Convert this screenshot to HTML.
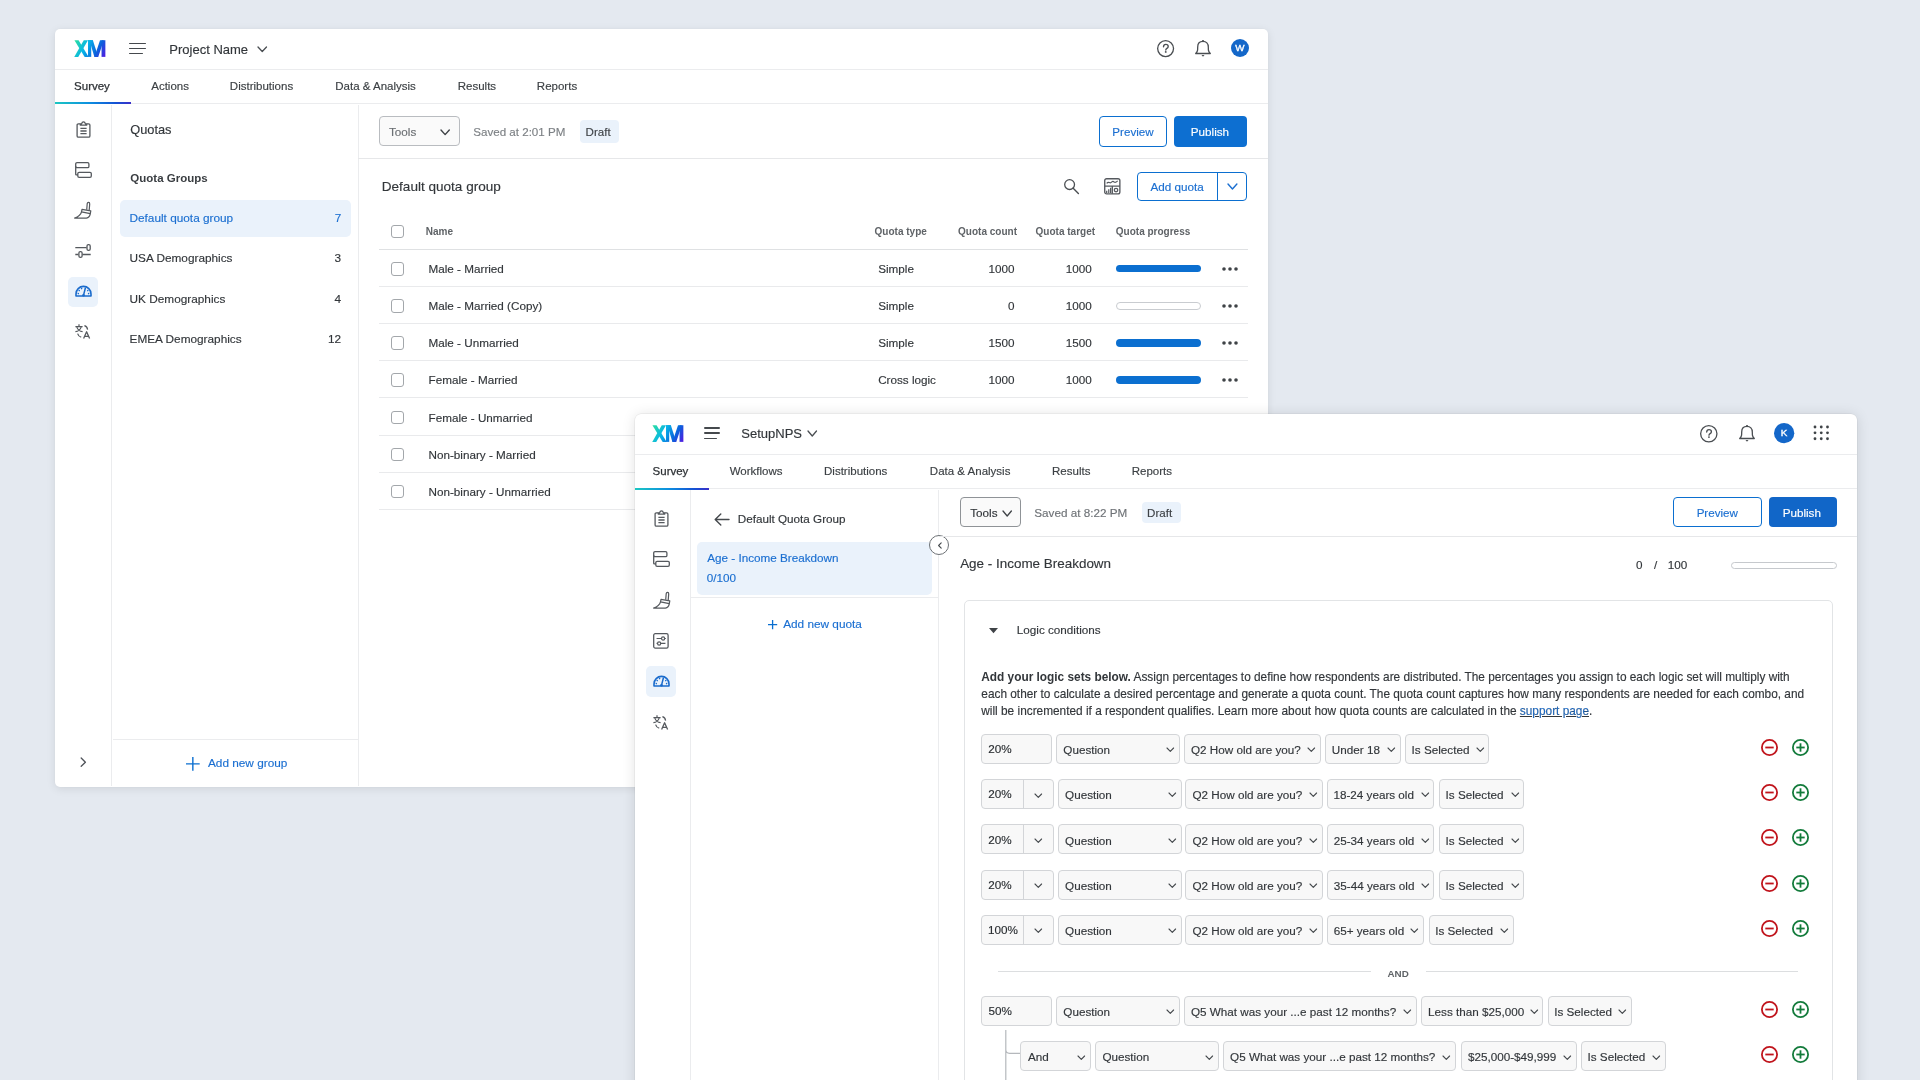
<!DOCTYPE html>
<html><head><meta charset="utf-8"><title>Quotas</title>
<style>
html,body{margin:0;padding:0}
body{width:1920px;height:1080px;overflow:hidden;position:relative;background:#e4e9f0;font-family:"Liberation Sans",sans-serif}
.t{position:absolute;white-space:nowrap}
svg{overflow:visible}
</style></head><body>
<div style="position:absolute;left:0;top:0;width:1920px;height:1080px;will-change:transform">
<div style="position:absolute;left:55.00px;top:29.00px;width:1213.00px;height:757.80px;background:#fff;border-radius:5px;box-shadow:0 2px 10px rgba(0,0,0,0.09),0 0 2px rgba(0,0,0,0.05)"></div>
<svg style="position:absolute;left:74.44px;top:39.78px;" width="31.56" height="17.11" viewBox="200 170 1420 770" fill="none"><defs><linearGradient id="lg1" x1="200" y1="150" x2="1640" y2="960" gradientUnits="userSpaceOnUse">
<stop offset="0" stop-color="#2fe39a"/><stop offset="0.38" stop-color="#07b4e8"/><stop offset="0.7" stop-color="#0a62dc"/><stop offset="1" stop-color="#5b10e2"/></linearGradient></defs>
<g fill="url(#lg1)">
<path d="M220 180 L405 180 L860 930 L680 930 Z"/>
<path d="M210 930 L390 930 L830 180 L640 180 Z"/>
<path d="M830 180 L975 180 L975 930 L830 930 Z"/>
<path d="M893 180 L1050 180 L1290 930 L1120 930 Z"/>
<path d="M1370 180 L1540 180 L1290 930 L1120 930 Z"/>
<path d="M1440 180 L1612 180 L1612 930 L1440 930 Z"/>
<path d="M830 180 L1050 180 L1050 240 L830 240 Z"/>
</g></svg>
<div style="position:absolute;left:129.00px;top:42.75px;width:17.00px;height:1.70px;background:#45494d;border-radius:1px"></div>
<div style="position:absolute;left:129.00px;top:47.75px;width:17.00px;height:1.70px;background:#45494d;border-radius:1px"></div>
<div style="position:absolute;left:129.00px;top:52.75px;width:13.50px;height:1.70px;background:#45494d;border-radius:1px"></div>
<div class="t" style="left:169.33px;top:42.75px;font-size:13px;line-height:13px;color:#32363a;-webkit-text-stroke:0.15px #32363a;">Project Name</div>
<svg style="position:absolute;left:257.30px;top:46.30px;" width="10.50" height="6.50" viewBox="-1 -1 10.5 6.5" fill="none"><path d="M0 0 L4.25 4.5 L8.5 0" stroke="#4a4e52" stroke-width="1.3" stroke-linecap="round" stroke-linejoin="round"/></svg>
<svg style="position:absolute;left:1156.20px;top:38.80px;" width="19.20" height="19.20" viewBox="-9.6 -9.6 19.2 19.2" fill="none"><circle cx="0" cy="0" r="7.949999999999999" stroke="#4a4e52" stroke-width="1.3"/><path d="M-2.1 -1.8 Q-2 -4.2 0.2 -4.2 Q2.6 -4.2 2.6 -2.1 Q2.6 -0.9 1.3 -0.2 Q0.2 0.4 0.2 1.4" stroke="#4a4e52" stroke-width="1.35" stroke-linecap="round" stroke-linejoin="round"/><circle cx="0.15" cy="3.3" r="0.95" fill="#4a4e52"/></svg>
<svg style="position:absolute;left:1195.00px;top:39.80px;" width="16.00" height="17.00" viewBox="0 0 16 17" fill="none"><path d="M8 1.3 C4.7 1.3 2.7 3.5 2.7 7 L2.6 10.2 Q2.3 12 0.7 13.5 L15.3 13.5 Q13.7 12 13.4 10.2 L13.3 7 C13.3 3.5 11.3 1.3 8 1.3 Z" stroke="#4a4e52" stroke-width="1.3" stroke-linejoin="round"/><circle cx="8" cy="1.1" r="1.05" fill="#4a4e52"/><path d="M6.5 15 L9.5 15 L8 16.7 Z" fill="#4a4e52"/></svg>
<svg style="position:absolute;left:1230.80px;top:39.00px;" width="18.00" height="18.00" viewBox="0 0 18 18" fill="none"><circle cx="9.0" cy="9.0" r="9.0" fill="#1467c9"/></svg>
<div class="t" style="left:1235.18px;top:43.10px;font-size:9.8px;line-height:9.8px;color:#ffffff;-webkit-text-stroke:0.35px #fff;">W</div>
<div style="position:absolute;left:55.00px;top:69.00px;width:1213.00px;height:1.00px;background:#ebecee"></div>
<div class="t" style="left:74.08px;top:81.07px;font-size:11.5px;line-height:11.5px;color:#2e3236;-webkit-text-stroke:0.25px #2e3236;">Survey</div>
<div class="t" style="left:151.23px;top:81.07px;font-size:11.5px;line-height:11.5px;color:#3c4044;-webkit-text-stroke:0.15px #3c4044;">Actions</div>
<div class="t" style="left:229.86px;top:81.07px;font-size:11.5px;line-height:11.5px;color:#3c4044;-webkit-text-stroke:0.15px #3c4044;">Distributions</div>
<div class="t" style="left:335.26px;top:81.07px;font-size:11.5px;line-height:11.5px;color:#3c4044;-webkit-text-stroke:0.15px #3c4044;">Data &amp; Analysis</div>
<div class="t" style="left:457.76px;top:81.07px;font-size:11.5px;line-height:11.5px;color:#3c4044;-webkit-text-stroke:0.15px #3c4044;">Results</div>
<div class="t" style="left:536.86px;top:81.07px;font-size:11.5px;line-height:11.5px;color:#3c4044;-webkit-text-stroke:0.15px #3c4044;">Reports</div>
<div style="position:absolute;left:55.00px;top:103.00px;width:1213.00px;height:1.00px;background:#ebecee"></div>
<div style="position:absolute;left:55.00px;top:102.30px;width:76.00px;height:2.00px;background:linear-gradient(90deg,#1cc7c2 0%,#0d8fe0 45%,#1552d4 80%,#3a2fc9 100%)"></div>
<div style="position:absolute;left:111.30px;top:104.60px;width:1.00px;height:681.40px;background:#ebecee"></div>
<div style="position:absolute;left:357.80px;top:104.60px;width:1.00px;height:681.40px;background:#ebecee"></div>
<svg style="position:absolute;left:75.50px;top:121.00px;" width="15.00" height="17.00" viewBox="0 0 15 17" fill="none"><path d="M4.3 2.8 L2.4 2.8 Q1.1 2.8 1.1 4.1 L1.1 14.9 Q1.1 16.2 2.4 16.2 L12.6 16.2 Q13.9 16.2 13.9 14.9 L13.9 4.1 Q13.9 2.8 12.6 2.8 L10.7 2.8" stroke="#55595e" stroke-width="1.3"/><path d="M4.3 2.8 L5.6 2.8 Q6 0.8 7.5 0.8 Q9 0.8 9.4 2.8 L10.7 2.8 L10.7 4.2 L4.3 4.2 Z" stroke="#55595e" stroke-width="1.2" stroke-linejoin="round"/><path d="M4.4 7.4 H10.6 M4.4 10 H10.6 M4.4 12.6 H10.6" stroke="#55595e" stroke-width="1.3"/></svg>
<svg style="position:absolute;left:74.50px;top:161.80px;" width="17.00" height="17.00" viewBox="0 0 17 17" fill="none"><rect x="0.7" y="0.7" width="13.2" height="5" rx="1.3" stroke="#55595e" stroke-width="1.3"/><rect x="2.8" y="10.3" width="13.5" height="5" rx="1.3" stroke="#55595e" stroke-width="1.3"/><path d="M0.7 4 L0.7 12.2 Q0.7 12.8 1.3 12.8 L2.8 12.8" stroke="#55595e" stroke-width="1.3"/></svg>
<svg style="position:absolute;left:74.00px;top:202.00px;" width="17.00" height="17.00" viewBox="0 0 17 17" fill="none"><path d="M12.7 7.7 L13.2 1.7 Q13.4 0.3 14.6 0.4 Q15.8 0.5 15.7 1.9 L15.2 8.2" stroke="#55595e" stroke-width="1.2"/><path d="M8 7.3 L16.8 8.9 L16.3 11.7 L7.5 9.9 Z" stroke="#55595e" stroke-width="1.2" stroke-linejoin="round"/><path d="M7.5 9.9 Q6.6 14 0.6 16.1 L12.4 16.1 Q15.6 15.9 16.3 11.7" stroke="#55595e" stroke-width="1.2" stroke-linejoin="round"/></svg>
<svg style="position:absolute;left:75.00px;top:244.00px;" width="16.00" height="14.00" viewBox="0 0 16 14" fill="none"><path d="M0.3 3.6 H11.6 M0.3 10.5 H3.4 M7.4 10.5 H15.7" stroke="#55595e" stroke-width="1.3"/><rect x="12" y="0.7" width="3.2" height="5.6" rx="1.4" stroke="#55595e" stroke-width="1.3"/><rect x="3.9" y="7.7" width="3.2" height="5.6" rx="1.4" stroke="#55595e" stroke-width="1.3"/></svg>
<div style="position:absolute;left:68.00px;top:276.50px;width:30.00px;height:30.00px;background:#eaf2fb;border-radius:5px"></div>
<svg style="position:absolute;left:74.50px;top:284.80px;" width="17.00" height="12.00" viewBox="0 0 17 12" fill="none"><path d="M1 11 L1 8.9 A7.5 7.5 0 0 1 16 8.9 L16 11 Z" stroke="#1a6bcc" stroke-width="1.6" stroke-linejoin="round"/><path d="M8.5 10.4 L10.3 3.2" stroke="#1a6bcc" stroke-width="1.5" stroke-linecap="round"/><circle cx="8.5" cy="10.2" r="1.3" fill="#1a6bcc"/><circle cx="4.2" cy="5.6" r="0.8" fill="#1a6bcc"/><circle cx="3.3" cy="8.6" r="0.8" fill="#1a6bcc"/><circle cx="6.6" cy="3.6" r="0.8" fill="#1a6bcc"/><circle cx="12.8" cy="5.6" r="0.8" fill="#1a6bcc"/><circle cx="13.6" cy="8.6" r="0.8" fill="#1a6bcc"/></svg>
<svg style="position:absolute;left:75.00px;top:324.00px;" width="16.00" height="15.00" viewBox="0 0 16 15" fill="none"><path d="M0.4 2.6 H7.6 M4 0.3 V2.6 M1.6 2.6 Q3.2 7.2 7.6 7.6 M6.4 2.6 Q4.8 7.2 0.4 7.6" stroke="#55595e" stroke-width="1.2"/><path d="M9.4 1.6 Q12.2 2.4 12.6 5.6 M2.6 9.6 Q3.4 12.4 6.2 13.2" stroke="#55595e" stroke-width="1.2"/><path d="M8.6 14.6 L11.6 7.8 L14.6 14.6 M9.6 12.4 H13.6" stroke="#55595e" stroke-width="1.3" stroke-linejoin="round"/></svg>
<svg style="position:absolute;left:79.50px;top:757.30px;" width="7.00" height="10.00" viewBox="0 0 7 10" fill="none"><path d="M1.2 1 L5.4 5.2 L1.2 9.3" stroke="#50545a" stroke-width="1.3" stroke-linecap="round" stroke-linejoin="round"/></svg>
<div class="t" style="left:130.19px;top:123.76px;font-size:12.8px;line-height:12.8px;color:#32363a;-webkit-text-stroke:0.15px #32363a;">Quotas</div>
<div class="t" style="left:130.33px;top:172.77px;font-size:11.5px;line-height:11.5px;color:#3a3e42;font-weight:bold;">Quota Groups</div>
<div style="position:absolute;left:120.20px;top:199.80px;width:230.60px;height:36.90px;background:#eaf2fb;border-radius:5px"></div>
<div class="t" style="left:129.53px;top:212.71px;font-size:11.8px;line-height:11.8px;color:#1b6fd1;-webkit-text-stroke:0.15px #1b6fd1;">Default quota group</div>
<div class="t" style="left:334.63px;top:212.71px;font-size:11.8px;line-height:11.8px;color:#1b6fd1;-webkit-text-stroke:0.15px #1b6fd1;">7</div>
<div class="t" style="left:129.59px;top:253.41px;font-size:11.8px;line-height:11.8px;color:#32363a;-webkit-text-stroke:0.15px #32363a;">USA Demographics</div>
<div class="t" style="left:334.56px;top:253.41px;font-size:11.8px;line-height:11.8px;color:#32363a;-webkit-text-stroke:0.15px #32363a;">3</div>
<div class="t" style="left:129.59px;top:293.91px;font-size:11.8px;line-height:11.8px;color:#32363a;-webkit-text-stroke:0.15px #32363a;">UK Demographics</div>
<div class="t" style="left:334.38px;top:293.91px;font-size:11.8px;line-height:11.8px;color:#32363a;-webkit-text-stroke:0.15px #32363a;">4</div>
<div class="t" style="left:129.53px;top:334.41px;font-size:11.8px;line-height:11.8px;color:#32363a;-webkit-text-stroke:0.15px #32363a;">EMEA Demographics</div>
<div class="t" style="left:328.07px;top:334.41px;font-size:11.8px;line-height:11.8px;color:#32363a;-webkit-text-stroke:0.15px #32363a;">12</div>
<div style="position:absolute;left:113.00px;top:739.20px;width:245.00px;height:1.00px;background:#ebecee"></div>
<svg style="position:absolute;left:185.80px;top:757.00px;" width="13.70" height="13.80" viewBox="0 0 13.699999999999989 13.799999999999955" fill="none"><path d="M6.849999999999994 0 V13.799999999999955 M0 6.899999999999977 H13.699999999999989" stroke="#0b6fd0" stroke-width="1.4"/></svg>
<div class="t" style="left:207.98px;top:758.31px;font-size:11.8px;line-height:11.8px;color:#1b6fd1;-webkit-text-stroke:0.15px #1b6fd1;">Add new group</div>
<div style="position:absolute;left:379.25px;top:116.40px;width:80.35px;height:29.90px;box-sizing:border-box;border:1px solid #b9bcc0;border-radius:4px;background:#fafafa"></div>
<div class="t" style="left:388.94px;top:125.70px;font-size:11.7px;line-height:11.7px;color:#6b6f73;-webkit-text-stroke:0.15px #6b6f73;">Tools</div>
<svg style="position:absolute;left:439.50px;top:129.00px;" width="10.30" height="6.60" viewBox="-1 -1 10.300000000000011 6.599999999999994" fill="none"><path d="M0 0 L4.150000000000006 4.599999999999994 L8.300000000000011 0" stroke="#3f4347" stroke-width="1.4" stroke-linecap="round" stroke-linejoin="round"/></svg>
<div class="t" style="left:473.22px;top:125.78px;font-size:11.6px;line-height:11.6px;color:#7d8185;-webkit-text-stroke:0.15px #7d8185;">Saved at 2:01 PM</div>
<div style="position:absolute;left:580.00px;top:119.60px;width:39.30px;height:23.00px;background:#eaf2fb;border-radius:4px"></div>
<div class="t" style="left:585.55px;top:125.78px;font-size:11.6px;line-height:11.6px;color:#3f4347;-webkit-text-stroke:0.15px #3f4347;">Draft</div>
<div style="position:absolute;left:1099.30px;top:116.25px;width:68.20px;height:30.25px;box-sizing:border-box;border:1px solid #0b6fd0;border-radius:4px;background:#fff"></div>
<div class="t" style="left:1112.35px;top:126.38px;font-size:11.6px;line-height:11.6px;color:#1b6fd1;-webkit-text-stroke:0.15px #1b6fd1;">Preview</div>
<div style="position:absolute;left:1174.30px;top:116.25px;width:72.40px;height:30.25px;background:#0d6fd1;border-radius:4px"></div>
<div class="t" style="left:1190.74px;top:126.30px;font-size:11.7px;line-height:11.7px;color:#ffffff;-webkit-text-stroke:0.15px #ffffff;">Publish</div>
<div style="position:absolute;left:358.00px;top:158.10px;width:910.00px;height:1.00px;background:#e6e7e9"></div>
<div class="t" style="left:381.79px;top:179.53px;font-size:13.55px;line-height:13.55px;color:#32363a;-webkit-text-stroke:0.15px #32363a;">Default quota group</div>
<svg style="position:absolute;left:1063.80px;top:179.00px;" width="15.00" height="15.00" viewBox="0 0 15 15" fill="none"><circle cx="5.6" cy="5.6" r="4.9" stroke="#4a4e52" stroke-width="1.3"/><path d="M9.2 9.3 L14.4 14.4" stroke="#4a4e52" stroke-width="1.4" stroke-linecap="round"/></svg>
<svg style="position:absolute;left:1103.60px;top:177.80px;" width="16.60" height="16.60" viewBox="0 0 16 16" fill="none"><rect x="0.7" y="0.7" width="14.6" height="14.6" rx="1.8" stroke="#55595e" stroke-width="1.3"/><path d="M0.7 7.8 H15.3 M8 7.8 V15.3" stroke="#55595e" stroke-width="1.3"/><path d="M2.6 5.2 Q3.8 3.6 5.2 4.4 Q6.4 5.2 7.6 3.8 Q8.6 2.8 9.8 3.9 Q11 4.8 13.2 2.8" stroke="#55595e" stroke-width="1.1"/><path d="M2.6 14.4 V12.2 M4.6 14.4 V10.8 M6.4 14.4 V9.4" stroke="#55595e" stroke-width="1.2"/><circle cx="11.6" cy="11.6" r="1.7" stroke="#55595e" stroke-width="1.2"/></svg>
<div style="position:absolute;left:1137.00px;top:171.50px;width:110.00px;height:29.30px;box-sizing:border-box;border:1px solid #0b6fd0;border-radius:4px;background:#fff"></div>
<div style="position:absolute;left:1217.00px;top:171.50px;width:1.00px;height:29.30px;background:#0b6fd0"></div>
<div class="t" style="left:1150.58px;top:180.90px;font-size:11.7px;line-height:11.7px;color:#1b6fd1;-webkit-text-stroke:0.15px #1b6fd1;">Add quota</div>
<svg style="position:absolute;left:1226.90px;top:182.80px;" width="10.90" height="7.00" viewBox="-1 -1 10.899999999999864 7.0" fill="none"><path d="M0 0 L4.449999999999932 5.0 L8.899999999999864 0" stroke="#1b6fd1" stroke-width="1.4" stroke-linecap="round" stroke-linejoin="round"/></svg>
<div style="position:absolute;left:390.60px;top:225.00px;width:13.80px;height:13.40px;box-sizing:border-box;border:1.2px solid #a3a7ab;border-radius:3px;background:#fff"></div>
<div class="t" style="left:425.73px;top:226.84px;font-size:10px;line-height:10px;color:#5f6367;font-weight:bold;">Name</div>
<div class="t" style="left:874.59px;top:226.94px;font-size:10px;line-height:10px;color:#5f6367;font-weight:bold;">Quota type</div>
<div class="t" style="left:958.09px;top:226.94px;font-size:10px;line-height:10px;color:#5f6367;font-weight:bold;">Quota count</div>
<div class="t" style="left:1035.59px;top:226.94px;font-size:10px;line-height:10px;color:#5f6367;font-weight:bold;">Quota target</div>
<div class="t" style="left:1115.84px;top:226.94px;font-size:10px;line-height:10px;color:#5f6367;font-weight:bold;">Quota progress</div>
<div style="position:absolute;left:379.00px;top:249.10px;width:868.50px;height:1.00px;background:#dfe1e3"></div>
<div style="position:absolute;left:390.60px;top:262.30px;width:13.80px;height:13.40px;box-sizing:border-box;border:1.2px solid #a3a7ab;border-radius:3px;background:#fff"></div>
<div class="t" style="left:428.54px;top:263.30px;font-size:11.7px;line-height:11.7px;color:#32363a;-webkit-text-stroke:0.15px #32363a;">Male - Married</div>
<div class="t" style="left:878.22px;top:263.30px;font-size:11.7px;line-height:11.7px;color:#32363a;-webkit-text-stroke:0.15px #32363a;">Simple</div>
<div class="t" style="left:988.43px;top:263.30px;font-size:11.7px;line-height:11.7px;color:#32363a;-webkit-text-stroke:0.15px #32363a;">1000</div>
<div class="t" style="left:1065.68px;top:263.30px;font-size:11.7px;line-height:11.7px;color:#32363a;-webkit-text-stroke:0.15px #32363a;">1000</div>
<div style="position:absolute;left:1116.25px;top:265.30px;width:84.35px;height:7.20px;background:#0b6fd0;border-radius:4px"></div>
<svg style="position:absolute;left:1221.50px;top:266.90px" width="4" height="4"><circle cx="2" cy="2" r="1.8" fill="#3f4347"/></svg>
<svg style="position:absolute;left:1227.55px;top:266.90px" width="4" height="4"><circle cx="2" cy="2" r="1.8" fill="#3f4347"/></svg>
<svg style="position:absolute;left:1233.60px;top:266.90px" width="4" height="4"><circle cx="2" cy="2" r="1.8" fill="#3f4347"/></svg>
<div style="position:absolute;left:379.00px;top:286.30px;width:868.50px;height:1.00px;background:#e9eaec"></div>
<div style="position:absolute;left:390.60px;top:299.35px;width:13.80px;height:13.40px;box-sizing:border-box;border:1.2px solid #a3a7ab;border-radius:3px;background:#fff"></div>
<div class="t" style="left:428.54px;top:300.35px;font-size:11.7px;line-height:11.7px;color:#32363a;-webkit-text-stroke:0.15px #32363a;">Male - Married (Copy)</div>
<div class="t" style="left:878.22px;top:300.35px;font-size:11.7px;line-height:11.7px;color:#32363a;-webkit-text-stroke:0.15px #32363a;">Simple</div>
<div class="t" style="left:1007.95px;top:300.35px;font-size:11.7px;line-height:11.7px;color:#32363a;-webkit-text-stroke:0.15px #32363a;">0</div>
<div class="t" style="left:1065.68px;top:300.35px;font-size:11.7px;line-height:11.7px;color:#32363a;-webkit-text-stroke:0.15px #32363a;">1000</div>
<div style="position:absolute;left:1116.25px;top:302.35px;width:84.35px;height:7.20px;box-sizing:border-box;border:1px solid #c9ccd0;border-radius:4px;background:#fff"></div>
<svg style="position:absolute;left:1221.50px;top:303.95px" width="4" height="4"><circle cx="2" cy="2" r="1.8" fill="#3f4347"/></svg>
<svg style="position:absolute;left:1227.55px;top:303.95px" width="4" height="4"><circle cx="2" cy="2" r="1.8" fill="#3f4347"/></svg>
<svg style="position:absolute;left:1233.60px;top:303.95px" width="4" height="4"><circle cx="2" cy="2" r="1.8" fill="#3f4347"/></svg>
<div style="position:absolute;left:379.00px;top:323.35px;width:868.50px;height:1.00px;background:#e9eaec"></div>
<div style="position:absolute;left:390.60px;top:336.40px;width:13.80px;height:13.40px;box-sizing:border-box;border:1.2px solid #a3a7ab;border-radius:3px;background:#fff"></div>
<div class="t" style="left:428.54px;top:337.40px;font-size:11.7px;line-height:11.7px;color:#32363a;-webkit-text-stroke:0.15px #32363a;">Male - Unmarried</div>
<div class="t" style="left:878.22px;top:337.40px;font-size:11.7px;line-height:11.7px;color:#32363a;-webkit-text-stroke:0.15px #32363a;">Simple</div>
<div class="t" style="left:988.43px;top:337.40px;font-size:11.7px;line-height:11.7px;color:#32363a;-webkit-text-stroke:0.15px #32363a;">1500</div>
<div class="t" style="left:1065.68px;top:337.40px;font-size:11.7px;line-height:11.7px;color:#32363a;-webkit-text-stroke:0.15px #32363a;">1500</div>
<div style="position:absolute;left:1116.25px;top:339.40px;width:84.35px;height:7.20px;background:#0b6fd0;border-radius:4px"></div>
<svg style="position:absolute;left:1221.50px;top:341.00px" width="4" height="4"><circle cx="2" cy="2" r="1.8" fill="#3f4347"/></svg>
<svg style="position:absolute;left:1227.55px;top:341.00px" width="4" height="4"><circle cx="2" cy="2" r="1.8" fill="#3f4347"/></svg>
<svg style="position:absolute;left:1233.60px;top:341.00px" width="4" height="4"><circle cx="2" cy="2" r="1.8" fill="#3f4347"/></svg>
<div style="position:absolute;left:379.00px;top:360.40px;width:868.50px;height:1.00px;background:#e9eaec"></div>
<div style="position:absolute;left:390.60px;top:373.45px;width:13.80px;height:13.40px;box-sizing:border-box;border:1.2px solid #a3a7ab;border-radius:3px;background:#fff"></div>
<div class="t" style="left:428.54px;top:374.45px;font-size:11.7px;line-height:11.7px;color:#32363a;-webkit-text-stroke:0.15px #32363a;">Female - Married</div>
<div class="t" style="left:878.16px;top:374.45px;font-size:11.7px;line-height:11.7px;color:#32363a;-webkit-text-stroke:0.15px #32363a;">Cross logic</div>
<div class="t" style="left:988.43px;top:374.45px;font-size:11.7px;line-height:11.7px;color:#32363a;-webkit-text-stroke:0.15px #32363a;">1000</div>
<div class="t" style="left:1065.68px;top:374.45px;font-size:11.7px;line-height:11.7px;color:#32363a;-webkit-text-stroke:0.15px #32363a;">1000</div>
<div style="position:absolute;left:1116.25px;top:376.45px;width:84.35px;height:7.20px;background:#0b6fd0;border-radius:4px"></div>
<svg style="position:absolute;left:1221.50px;top:378.05px" width="4" height="4"><circle cx="2" cy="2" r="1.8" fill="#3f4347"/></svg>
<svg style="position:absolute;left:1227.55px;top:378.05px" width="4" height="4"><circle cx="2" cy="2" r="1.8" fill="#3f4347"/></svg>
<svg style="position:absolute;left:1233.60px;top:378.05px" width="4" height="4"><circle cx="2" cy="2" r="1.8" fill="#3f4347"/></svg>
<div style="position:absolute;left:379.00px;top:397.45px;width:868.50px;height:1.00px;background:#e9eaec"></div>
<div style="position:absolute;left:390.60px;top:410.50px;width:13.80px;height:13.40px;box-sizing:border-box;border:1.2px solid #a3a7ab;border-radius:3px;background:#fff"></div>
<div class="t" style="left:428.54px;top:411.50px;font-size:11.7px;line-height:11.7px;color:#32363a;-webkit-text-stroke:0.15px #32363a;">Female - Unmarried</div>
<div class="t" style="left:878.22px;top:411.50px;font-size:11.7px;line-height:11.7px;color:#32363a;-webkit-text-stroke:0.15px #32363a;">Simple</div>
<div class="t" style="left:988.43px;top:411.50px;font-size:11.7px;line-height:11.7px;color:#32363a;-webkit-text-stroke:0.15px #32363a;">1000</div>
<div class="t" style="left:1065.68px;top:411.50px;font-size:11.7px;line-height:11.7px;color:#32363a;-webkit-text-stroke:0.15px #32363a;">1000</div>
<div style="position:absolute;left:1116.25px;top:413.50px;width:84.35px;height:7.20px;background:#0b6fd0;border-radius:4px"></div>
<svg style="position:absolute;left:1221.50px;top:415.10px" width="4" height="4"><circle cx="2" cy="2" r="1.8" fill="#3f4347"/></svg>
<svg style="position:absolute;left:1227.55px;top:415.10px" width="4" height="4"><circle cx="2" cy="2" r="1.8" fill="#3f4347"/></svg>
<svg style="position:absolute;left:1233.60px;top:415.10px" width="4" height="4"><circle cx="2" cy="2" r="1.8" fill="#3f4347"/></svg>
<div style="position:absolute;left:379.00px;top:434.50px;width:868.50px;height:1.00px;background:#e9eaec"></div>
<div style="position:absolute;left:390.60px;top:447.55px;width:13.80px;height:13.40px;box-sizing:border-box;border:1.2px solid #a3a7ab;border-radius:3px;background:#fff"></div>
<div class="t" style="left:428.54px;top:448.55px;font-size:11.7px;line-height:11.7px;color:#32363a;-webkit-text-stroke:0.15px #32363a;">Non-binary - Married</div>
<div class="t" style="left:878.22px;top:448.55px;font-size:11.7px;line-height:11.7px;color:#32363a;-webkit-text-stroke:0.15px #32363a;">Simple</div>
<div class="t" style="left:988.43px;top:448.55px;font-size:11.7px;line-height:11.7px;color:#32363a;-webkit-text-stroke:0.15px #32363a;">1000</div>
<div class="t" style="left:1065.68px;top:448.55px;font-size:11.7px;line-height:11.7px;color:#32363a;-webkit-text-stroke:0.15px #32363a;">1000</div>
<div style="position:absolute;left:1116.25px;top:450.55px;width:84.35px;height:7.20px;background:#0b6fd0;border-radius:4px"></div>
<svg style="position:absolute;left:1221.50px;top:452.15px" width="4" height="4"><circle cx="2" cy="2" r="1.8" fill="#3f4347"/></svg>
<svg style="position:absolute;left:1227.55px;top:452.15px" width="4" height="4"><circle cx="2" cy="2" r="1.8" fill="#3f4347"/></svg>
<svg style="position:absolute;left:1233.60px;top:452.15px" width="4" height="4"><circle cx="2" cy="2" r="1.8" fill="#3f4347"/></svg>
<div style="position:absolute;left:379.00px;top:471.55px;width:868.50px;height:1.00px;background:#e9eaec"></div>
<div style="position:absolute;left:390.60px;top:484.60px;width:13.80px;height:13.40px;box-sizing:border-box;border:1.2px solid #a3a7ab;border-radius:3px;background:#fff"></div>
<div class="t" style="left:428.54px;top:485.60px;font-size:11.7px;line-height:11.7px;color:#32363a;-webkit-text-stroke:0.15px #32363a;">Non-binary - Unmarried</div>
<div class="t" style="left:878.22px;top:485.60px;font-size:11.7px;line-height:11.7px;color:#32363a;-webkit-text-stroke:0.15px #32363a;">Simple</div>
<div class="t" style="left:988.43px;top:485.60px;font-size:11.7px;line-height:11.7px;color:#32363a;-webkit-text-stroke:0.15px #32363a;">1000</div>
<div class="t" style="left:1065.68px;top:485.60px;font-size:11.7px;line-height:11.7px;color:#32363a;-webkit-text-stroke:0.15px #32363a;">1000</div>
<div style="position:absolute;left:1116.25px;top:487.60px;width:84.35px;height:7.20px;background:#0b6fd0;border-radius:4px"></div>
<svg style="position:absolute;left:1221.50px;top:489.20px" width="4" height="4"><circle cx="2" cy="2" r="1.8" fill="#3f4347"/></svg>
<svg style="position:absolute;left:1227.55px;top:489.20px" width="4" height="4"><circle cx="2" cy="2" r="1.8" fill="#3f4347"/></svg>
<svg style="position:absolute;left:1233.60px;top:489.20px" width="4" height="4"><circle cx="2" cy="2" r="1.8" fill="#3f4347"/></svg>
<div style="position:absolute;left:379.00px;top:508.60px;width:868.50px;height:1.00px;background:#e9eaec"></div>
<div style="position:absolute;left:634.60px;top:413.50px;width:1222.60px;height:706.50px;background:#fff;border-radius:6px;box-shadow:0 0 0 0.5px rgba(0,0,0,0.08),0 1px 14px rgba(0,0,0,0.12)"></div>
<svg style="position:absolute;left:652.20px;top:424.60px;" width="31.56" height="17.11" viewBox="200 170 1420 770" fill="none"><defs><linearGradient id="lg2" x1="200" y1="150" x2="1640" y2="960" gradientUnits="userSpaceOnUse">
<stop offset="0" stop-color="#2fe39a"/><stop offset="0.38" stop-color="#07b4e8"/><stop offset="0.7" stop-color="#0a62dc"/><stop offset="1" stop-color="#5b10e2"/></linearGradient></defs>
<g fill="url(#lg2)">
<path d="M220 180 L405 180 L860 930 L680 930 Z"/>
<path d="M210 930 L390 930 L830 180 L640 180 Z"/>
<path d="M830 180 L975 180 L975 930 L830 930 Z"/>
<path d="M893 180 L1050 180 L1290 930 L1120 930 Z"/>
<path d="M1370 180 L1540 180 L1290 930 L1120 930 Z"/>
<path d="M1440 180 L1612 180 L1612 930 L1440 930 Z"/>
<path d="M830 180 L1050 180 L1050 240 L830 240 Z"/>
</g></svg>
<div style="position:absolute;left:704.00px;top:427.05px;width:16.30px;height:1.70px;background:#45494d;border-radius:1px"></div>
<div style="position:absolute;left:704.00px;top:432.25px;width:16.30px;height:1.70px;background:#45494d;border-radius:1px"></div>
<div style="position:absolute;left:704.00px;top:437.55px;width:13.00px;height:1.70px;background:#45494d;border-radius:1px"></div>
<div class="t" style="left:741.31px;top:426.75px;font-size:13px;line-height:13px;color:#32363a;-webkit-text-stroke:0.15px #32363a;">SetupNPS</div>
<svg style="position:absolute;left:807.30px;top:430.40px;" width="10.50" height="7.00" viewBox="-1 -1 10.5 7.0" fill="none"><path d="M0 0 L4.25 5.0 L8.5 0" stroke="#4a4e52" stroke-width="1.3" stroke-linecap="round" stroke-linejoin="round"/></svg>
<svg style="position:absolute;left:1699.20px;top:423.60px;" width="19.60" height="19.60" viewBox="-9.8 -9.8 19.6 19.6" fill="none"><circle cx="0" cy="0" r="8.15" stroke="#4a4e52" stroke-width="1.3"/><path d="M-2.1 -1.8 Q-2 -4.2 0.2 -4.2 Q2.6 -4.2 2.6 -2.1 Q2.6 -0.9 1.3 -0.2 Q0.2 0.4 0.2 1.4" stroke="#4a4e52" stroke-width="1.35" stroke-linecap="round" stroke-linejoin="round"/><circle cx="0.15" cy="3.3" r="0.95" fill="#4a4e52"/></svg>
<svg style="position:absolute;left:1739.00px;top:424.60px;" width="16.00" height="17.00" viewBox="0 0 16 17" fill="none"><path d="M8 1.3 C4.7 1.3 2.7 3.5 2.7 7 L2.6 10.2 Q2.3 12 0.7 13.5 L15.3 13.5 Q13.7 12 13.4 10.2 L13.3 7 C13.3 3.5 11.3 1.3 8 1.3 Z" stroke="#4a4e52" stroke-width="1.3" stroke-linejoin="round"/><circle cx="8" cy="1.1" r="1.05" fill="#4a4e52"/><path d="M6.5 15 L9.5 15 L8 16.7 Z" fill="#4a4e52"/></svg>
<svg style="position:absolute;left:1773.85px;top:423.15px;" width="20.30" height="20.30" viewBox="0 0 20.3 20.3" fill="none"><circle cx="10.15" cy="10.15" r="10.15" fill="#1467c9"/></svg>
<div class="t" style="left:1780.73px;top:428.40px;font-size:9.8px;line-height:9.8px;color:#ffffff;-webkit-text-stroke:0.35px #fff;">K</div>
<svg style="position:absolute;left:1812.00px;top:424.25px;" width="18.50" height="17.75" viewBox="0 0 18.5 17.75" fill="none"><circle cx="3" cy="3.0" r="1.4" fill="#3f4347"/><circle cx="3" cy="8.850000000000023" r="1.4" fill="#3f4347"/><circle cx="3" cy="14.75" r="1.4" fill="#3f4347"/><circle cx="9.25" cy="3.0" r="1.4" fill="#3f4347"/><circle cx="9.25" cy="8.850000000000023" r="1.4" fill="#3f4347"/><circle cx="9.25" cy="14.75" r="1.4" fill="#3f4347"/><circle cx="15.5" cy="3.0" r="1.4" fill="#3f4347"/><circle cx="15.5" cy="8.850000000000023" r="1.4" fill="#3f4347"/><circle cx="15.5" cy="14.75" r="1.4" fill="#3f4347"/></svg>
<div style="position:absolute;left:634.60px;top:453.90px;width:1222.60px;height:1.00px;background:#ebecee"></div>
<div class="t" style="left:652.58px;top:465.87px;font-size:11.5px;line-height:11.5px;color:#2e3236;-webkit-text-stroke:0.25px #2e3236;">Survey</div>
<div class="t" style="left:729.70px;top:465.87px;font-size:11.5px;line-height:11.5px;color:#3c4044;-webkit-text-stroke:0.15px #3c4044;">Workflows</div>
<div class="t" style="left:824.06px;top:465.87px;font-size:11.5px;line-height:11.5px;color:#3c4044;-webkit-text-stroke:0.15px #3c4044;">Distributions</div>
<div class="t" style="left:929.86px;top:465.87px;font-size:11.5px;line-height:11.5px;color:#3c4044;-webkit-text-stroke:0.15px #3c4044;">Data &amp; Analysis</div>
<div class="t" style="left:1052.06px;top:465.87px;font-size:11.5px;line-height:11.5px;color:#3c4044;-webkit-text-stroke:0.15px #3c4044;">Results</div>
<div class="t" style="left:1131.76px;top:465.87px;font-size:11.5px;line-height:11.5px;color:#3c4044;-webkit-text-stroke:0.15px #3c4044;">Reports</div>
<div style="position:absolute;left:634.60px;top:488.10px;width:1222.60px;height:1.00px;background:#ebecee"></div>
<div style="position:absolute;left:634.60px;top:487.60px;width:74.20px;height:2.00px;background:linear-gradient(90deg,#1cc7c2 0%,#0d8fe0 45%,#1552d4 80%,#3a2fc9 100%)"></div>
<div style="position:absolute;left:690.20px;top:489.80px;width:1.00px;height:590.20px;background:#ebecee"></div>
<div style="position:absolute;left:938.20px;top:489.80px;width:1.00px;height:590.20px;background:#ebecee"></div>
<svg style="position:absolute;left:653.60px;top:509.80px;" width="15.00" height="17.00" viewBox="0 0 15 17" fill="none"><path d="M4.3 2.8 L2.4 2.8 Q1.1 2.8 1.1 4.1 L1.1 14.9 Q1.1 16.2 2.4 16.2 L12.6 16.2 Q13.9 16.2 13.9 14.9 L13.9 4.1 Q13.9 2.8 12.6 2.8 L10.7 2.8" stroke="#55595e" stroke-width="1.3"/><path d="M4.3 2.8 L5.6 2.8 Q6 0.8 7.5 0.8 Q9 0.8 9.4 2.8 L10.7 2.8 L10.7 4.2 L4.3 4.2 Z" stroke="#55595e" stroke-width="1.2" stroke-linejoin="round"/><path d="M4.4 7.4 H10.6 M4.4 10 H10.6 M4.4 12.6 H10.6" stroke="#55595e" stroke-width="1.3"/></svg>
<svg style="position:absolute;left:652.80px;top:551.00px;" width="17.00" height="17.00" viewBox="0 0 17 17" fill="none"><rect x="0.7" y="0.7" width="13.2" height="5" rx="1.3" stroke="#55595e" stroke-width="1.3"/><rect x="2.8" y="10.3" width="13.5" height="5" rx="1.3" stroke="#55595e" stroke-width="1.3"/><path d="M0.7 4 L0.7 12.2 Q0.7 12.8 1.3 12.8 L2.8 12.8" stroke="#55595e" stroke-width="1.3"/></svg>
<svg style="position:absolute;left:653.00px;top:591.50px;" width="17.00" height="17.00" viewBox="0 0 17 17" fill="none"><path d="M12.7 7.7 L13.2 1.7 Q13.4 0.3 14.6 0.4 Q15.8 0.5 15.7 1.9 L15.2 8.2" stroke="#55595e" stroke-width="1.2"/><path d="M8 7.3 L16.8 8.9 L16.3 11.7 L7.5 9.9 Z" stroke="#55595e" stroke-width="1.2" stroke-linejoin="round"/><path d="M7.5 9.9 Q6.6 14 0.6 16.1 L12.4 16.1 Q15.6 15.9 16.3 11.7" stroke="#55595e" stroke-width="1.2" stroke-linejoin="round"/></svg>
<svg style="position:absolute;left:653.40px;top:632.80px;" width="15.80" height="15.80" viewBox="0 0 16 16" fill="none"><rect x="0.7" y="0.7" width="14.6" height="14.6" rx="1.6" stroke="#55595e" stroke-width="1.3"/><path d="M3.6 5.6 H13 M3.6 10.6 H12.6" stroke="#55595e" stroke-width="1.2"/><circle cx="10.2" cy="5.6" r="1.6" fill="#fff" stroke="#55595e" stroke-width="1.2"/><circle cx="6.2" cy="10.6" r="1.6" fill="#fff" stroke="#55595e" stroke-width="1.2"/></svg>
<div style="position:absolute;left:646.10px;top:666.40px;width:30.00px;height:30.20px;background:#eaf2fb;border-radius:5px"></div>
<svg style="position:absolute;left:652.80px;top:674.80px;" width="17.00" height="12.00" viewBox="0 0 17 12" fill="none"><path d="M1 11 L1 8.9 A7.5 7.5 0 0 1 16 8.9 L16 11 Z" stroke="#1a6bcc" stroke-width="1.6" stroke-linejoin="round"/><path d="M8.5 10.4 L10.3 3.2" stroke="#1a6bcc" stroke-width="1.5" stroke-linecap="round"/><circle cx="8.5" cy="10.2" r="1.3" fill="#1a6bcc"/><circle cx="4.2" cy="5.6" r="0.8" fill="#1a6bcc"/><circle cx="3.3" cy="8.6" r="0.8" fill="#1a6bcc"/><circle cx="6.6" cy="3.6" r="0.8" fill="#1a6bcc"/><circle cx="12.8" cy="5.6" r="0.8" fill="#1a6bcc"/><circle cx="13.6" cy="8.6" r="0.8" fill="#1a6bcc"/></svg>
<svg style="position:absolute;left:653.40px;top:714.60px;" width="16.00" height="15.00" viewBox="0 0 16 15" fill="none"><path d="M0.4 2.6 H7.6 M4 0.3 V2.6 M1.6 2.6 Q3.2 7.2 7.6 7.6 M6.4 2.6 Q4.8 7.2 0.4 7.6" stroke="#55595e" stroke-width="1.2"/><path d="M9.4 1.6 Q12.2 2.4 12.6 5.6 M2.6 9.6 Q3.4 12.4 6.2 13.2" stroke="#55595e" stroke-width="1.2"/><path d="M8.6 14.6 L11.6 7.8 L14.6 14.6 M9.6 12.4 H13.6" stroke="#55595e" stroke-width="1.3" stroke-linejoin="round"/></svg>
<svg style="position:absolute;left:714.00px;top:512.50px;" width="16.00" height="13.00" viewBox="0 0 16 13" fill="none"><path d="M15 6.5 H1.5 M6.8 1 L1.2 6.5 L6.8 12" stroke="#45494d" stroke-width="1.4" stroke-linecap="round" stroke-linejoin="round"/></svg>
<div class="t" style="left:737.74px;top:512.60px;font-size:11.7px;line-height:11.7px;color:#32363a;-webkit-text-stroke:0.15px #32363a;">Default Quota Group</div>
<div style="position:absolute;left:697.00px;top:542.20px;width:234.80px;height:52.80px;background:#eaf2fb;border-radius:5px"></div>
<div class="t" style="left:707.28px;top:551.80px;font-size:11.7px;line-height:11.7px;color:#1b6fd1;-webkit-text-stroke:0.15px #1b6fd1;">Age - Income Breakdown</div>
<div class="t" style="left:706.84px;top:571.80px;font-size:11.7px;line-height:11.7px;color:#1b6fd1;-webkit-text-stroke:0.15px #1b6fd1;">0/100</div>
<div style="position:absolute;left:691.00px;top:597.10px;width:247.50px;height:1.00px;background:#ebecee"></div>
<svg style="position:absolute;left:768.00px;top:620.40px;" width="9.20" height="9.20" viewBox="0 0 9.200000000000045 9.200000000000045" fill="none"><path d="M4.600000000000023 0 V9.200000000000045 M0 4.600000000000023 H9.200000000000045" stroke="#0b6fd0" stroke-width="1.3"/></svg>
<div class="t" style="left:783.18px;top:618.71px;font-size:11.8px;line-height:11.8px;color:#1b6fd1;-webkit-text-stroke:0.15px #1b6fd1;">Add new quota</div>
<div style="position:absolute;left:929.40px;top:535.40px;width:20.00px;height:20.00px;box-sizing:border-box;border:1px solid #6d7175;border-radius:50%;background:#fff"></div>
<svg style="position:absolute;left:936.50px;top:542.00px;" width="6.00" height="7.00" viewBox="0 0 6 7" fill="none"><path d="M4.2 0.8 L1.6 3.5 L4.2 6.2" stroke="#45494d" stroke-width="1.1" stroke-linecap="round" stroke-linejoin="round"/></svg>
<div style="position:absolute;left:960.00px;top:497.40px;width:60.80px;height:30.10px;box-sizing:border-box;border:1px solid #8f9397;border-radius:4px;background:#fafafa"></div>
<div class="t" style="left:970.24px;top:506.80px;font-size:11.7px;line-height:11.7px;color:#32363a;-webkit-text-stroke:0.15px #32363a;">Tools</div>
<svg style="position:absolute;left:1002.20px;top:509.60px;" width="10.40" height="7.00" viewBox="-1 -1 10.399999999999977 7.0" fill="none"><path d="M0 0 L4.199999999999989 5.0 L8.399999999999977 0" stroke="#3f4347" stroke-width="1.3" stroke-linecap="round" stroke-linejoin="round"/></svg>
<div class="t" style="left:1034.27px;top:506.80px;font-size:11.7px;line-height:11.7px;color:#6f7377;-webkit-text-stroke:0.15px #6f7377;">Saved at 8:22 PM</div>
<div style="position:absolute;left:1141.80px;top:502.20px;width:39.00px;height:20.40px;background:#eaf2fb;border-radius:4px"></div>
<div class="t" style="left:1147.05px;top:506.88px;font-size:11.6px;line-height:11.6px;color:#3f4347;-webkit-text-stroke:0.15px #3f4347;">Draft</div>
<div style="position:absolute;left:1673.30px;top:497.20px;width:88.50px;height:30.30px;box-sizing:border-box;border:1px solid #0b6fd0;border-radius:4px;background:#fff"></div>
<div class="t" style="left:1696.65px;top:507.38px;font-size:11.6px;line-height:11.6px;color:#1b6fd1;-webkit-text-stroke:0.15px #1b6fd1;">Preview</div>
<div style="position:absolute;left:1769.00px;top:497.20px;width:67.80px;height:30.30px;background:#1166c8;border-radius:4px"></div>
<div class="t" style="left:1782.64px;top:507.30px;font-size:11.7px;line-height:11.7px;color:#ffffff;-webkit-text-stroke:0.15px #ffffff;">Publish</div>
<div style="position:absolute;left:939.00px;top:536.00px;width:918.20px;height:1.00px;background:#e6e7e9"></div>
<div class="t" style="left:960.17px;top:556.91px;font-size:13.45px;line-height:13.45px;color:#32363a;-webkit-text-stroke:0.15px #32363a;">Age - Income Breakdown</div>
<div class="t" style="left:1635.94px;top:559.30px;font-size:11.7px;line-height:11.7px;color:#32363a;-webkit-text-stroke:0.15px #32363a;">0</div>
<div class="t" style="left:1654.00px;top:559.30px;font-size:11.7px;line-height:11.7px;color:#32363a;-webkit-text-stroke:0.15px #32363a;">/</div>
<div class="t" style="left:1667.86px;top:559.30px;font-size:11.7px;line-height:11.7px;color:#32363a;-webkit-text-stroke:0.15px #32363a;">100</div>
<div style="position:absolute;left:1731.25px;top:562.00px;width:105.55px;height:6.80px;box-sizing:border-box;border:1px solid #c6c9cd;border-radius:4px;background:#fff"></div>
<div style="position:absolute;left:963.70px;top:600.30px;width:869.50px;height:599.70px;box-sizing:border-box;border:1px solid #e2e4e6;border-radius:5px;background:#fff"></div>
<svg style="position:absolute;left:988.60px;top:627.80px;" width="9.00" height="5.20" viewBox="0 0 9 5.2" fill="none"><path d="M0 0 H9 L4.5 5.2 Z" fill="#3f4347"/></svg>
<div class="t" style="left:1016.84px;top:624.30px;font-size:11.7px;line-height:11.7px;color:#32363a;-webkit-text-stroke:0.15px #32363a;">Logic conditions</div>
<div class="t" style="left:981.30px;top:669.49px;font-size:11.85px;line-height:17px;color:#32363a;white-space:nowrap;-webkit-text-stroke:0.15px #32363a"><b style="-webkit-text-stroke:0">Add your logic sets below.</b> Assign percentages to define how respondents are distributed. The percentages you assign to each logic set will multiply with<br>each other to calculate a desired percentage and generate a quota count. The quota count captures how many respondents are needed for each combo, and<br>will be incremented if a respondent qualifies. Learn more about how quota counts are calculated in the <span style="color:#1b6fd1;text-decoration:underline">support page</span>.</div>
<div style="position:absolute;left:981.30px;top:733.70px;width:70.90px;height:30.00px;box-sizing:border-box;border:1px solid #d3d5d8;border-radius:4px;background:#f8f8f8"></div>
<div class="t" style="left:988.21px;top:743.00px;font-size:11.7px;line-height:11.7px;color:#2a2e32;-webkit-text-stroke:0.15px #2a2e32;">20%</div>
<div style="position:absolute;left:1056.30px;top:733.70px;width:123.40px;height:30.00px;box-sizing:border-box;border:1px solid #d3d5d8;border-radius:4px;background:#f8f8f8"></div>
<div class="t" style="left:1063.35px;top:744.00px;font-size:11.7px;line-height:11.7px;color:#32363a;-webkit-text-stroke:0.15px #32363a;">Question</div>
<svg style="position:absolute;left:1165.80px;top:747.30px;" width="8.60" height="5.30" viewBox="-1 -1 8.600000000000136 5.2999999999999545" fill="none"><path d="M0 0 L3.300000000000068 3.2999999999999545 L6.600000000000136 0" stroke="#45494d" stroke-width="1.1" stroke-linecap="round" stroke-linejoin="round"/></svg>
<div style="position:absolute;left:1183.90px;top:733.70px;width:136.80px;height:30.00px;box-sizing:border-box;border:1px solid #d3d5d8;border-radius:4px;background:#f8f8f8"></div>
<div class="t" style="left:1190.95px;top:744.00px;font-size:11.7px;line-height:11.7px;color:#32363a;-webkit-text-stroke:0.15px #32363a;">Q2 How old are you?</div>
<svg style="position:absolute;left:1306.80px;top:747.30px;" width="8.60" height="5.30" viewBox="-1 -1 8.600000000000136 5.2999999999999545" fill="none"><path d="M0 0 L3.300000000000068 3.2999999999999545 L6.600000000000136 0" stroke="#45494d" stroke-width="1.1" stroke-linecap="round" stroke-linejoin="round"/></svg>
<div style="position:absolute;left:1325.10px;top:733.70px;width:75.60px;height:30.00px;box-sizing:border-box;border:1px solid #d3d5d8;border-radius:4px;background:#f8f8f8"></div>
<div class="t" style="left:1331.80px;top:744.00px;font-size:11.7px;line-height:11.7px;color:#32363a;-webkit-text-stroke:0.15px #32363a;">Under 18</div>
<svg style="position:absolute;left:1386.80px;top:747.30px;" width="8.60" height="5.30" viewBox="-1 -1 8.600000000000136 5.2999999999999545" fill="none"><path d="M0 0 L3.300000000000068 3.2999999999999545 L6.600000000000136 0" stroke="#45494d" stroke-width="1.1" stroke-linecap="round" stroke-linejoin="round"/></svg>
<div style="position:absolute;left:1405.10px;top:733.70px;width:84.40px;height:30.00px;box-sizing:border-box;border:1px solid #d3d5d8;border-radius:4px;background:#f8f8f8"></div>
<div class="t" style="left:1411.62px;top:744.00px;font-size:11.7px;line-height:11.7px;color:#32363a;-webkit-text-stroke:0.15px #32363a;">Is Selected</div>
<svg style="position:absolute;left:1475.60px;top:747.30px;" width="8.60" height="5.30" viewBox="-1 -1 8.600000000000136 5.2999999999999545" fill="none"><path d="M0 0 L3.300000000000068 3.2999999999999545 L6.600000000000136 0" stroke="#45494d" stroke-width="1.1" stroke-linecap="round" stroke-linejoin="round"/></svg>
<svg style="position:absolute;left:1759.90px;top:737.80px;" width="19.00" height="19.00" viewBox="0 0 19 19" fill="none"><circle cx="9.5" cy="9.5" r="7.6" stroke="#c0141c" stroke-width="1.8"/><path d="M5.3 9.5 H13.7" stroke="#c0141c" stroke-width="1.8"/></svg>
<svg style="position:absolute;left:1790.80px;top:737.80px;" width="19.00" height="19.00" viewBox="0 0 19 19" fill="none"><circle cx="9.5" cy="9.5" r="7.6" stroke="#137b3b" stroke-width="1.8"/><path d="M5.3 9.5 H13.7" stroke="#137b3b" stroke-width="1.8"/><path d="M9.5 5.3 V13.7" stroke="#137b3b" stroke-width="1.8"/></svg>
<div style="position:absolute;left:981.30px;top:778.80px;width:72.50px;height:30.00px;box-sizing:border-box;border:1px solid #d3d5d8;border-radius:4px;background:#f8f8f8"></div>
<div class="t" style="left:988.21px;top:788.10px;font-size:11.7px;line-height:11.7px;color:#2a2e32;-webkit-text-stroke:0.15px #2a2e32;">20%</div>
<div style="position:absolute;left:1023.30px;top:779.30px;width:1.00px;height:29.00px;background:#d3d5d8"></div>
<svg style="position:absolute;left:1034.00px;top:792.60px;" width="8.60" height="5.30" viewBox="-1 -1 8.599999999999909 5.300000000000068" fill="none"><path d="M0 0 L3.2999999999999545 3.300000000000068 L6.599999999999909 0" stroke="#45494d" stroke-width="1.1" stroke-linecap="round" stroke-linejoin="round"/></svg>
<div style="position:absolute;left:1058.00px;top:778.80px;width:123.70px;height:30.00px;box-sizing:border-box;border:1px solid #d3d5d8;border-radius:4px;background:#f8f8f8"></div>
<div class="t" style="left:1065.05px;top:789.10px;font-size:11.7px;line-height:11.7px;color:#32363a;-webkit-text-stroke:0.15px #32363a;">Question</div>
<svg style="position:absolute;left:1167.80px;top:792.40px;" width="8.60" height="5.30" viewBox="-1 -1 8.600000000000136 5.2999999999999545" fill="none"><path d="M0 0 L3.300000000000068 3.2999999999999545 L6.600000000000136 0" stroke="#45494d" stroke-width="1.1" stroke-linecap="round" stroke-linejoin="round"/></svg>
<div style="position:absolute;left:1185.40px;top:778.80px;width:137.20px;height:30.00px;box-sizing:border-box;border:1px solid #d3d5d8;border-radius:4px;background:#f8f8f8"></div>
<div class="t" style="left:1192.45px;top:789.10px;font-size:11.7px;line-height:11.7px;color:#32363a;-webkit-text-stroke:0.15px #32363a;">Q2 How old are you?</div>
<svg style="position:absolute;left:1308.70px;top:792.40px;" width="8.60" height="5.30" viewBox="-1 -1 8.600000000000136 5.2999999999999545" fill="none"><path d="M0 0 L3.300000000000068 3.2999999999999545 L6.600000000000136 0" stroke="#45494d" stroke-width="1.1" stroke-linecap="round" stroke-linejoin="round"/></svg>
<div style="position:absolute;left:1326.70px;top:778.80px;width:107.80px;height:30.00px;box-sizing:border-box;border:1px solid #d3d5d8;border-radius:4px;background:#f8f8f8"></div>
<div class="t" style="left:1333.41px;top:789.10px;font-size:11.7px;line-height:11.7px;color:#32363a;-webkit-text-stroke:0.15px #32363a;">18-24 years old</div>
<svg style="position:absolute;left:1420.60px;top:792.40px;" width="8.60" height="5.30" viewBox="-1 -1 8.600000000000136 5.2999999999999545" fill="none"><path d="M0 0 L3.300000000000068 3.2999999999999545 L6.600000000000136 0" stroke="#45494d" stroke-width="1.1" stroke-linecap="round" stroke-linejoin="round"/></svg>
<div style="position:absolute;left:1439.10px;top:778.80px;width:85.40px;height:30.00px;box-sizing:border-box;border:1px solid #d3d5d8;border-radius:4px;background:#f8f8f8"></div>
<div class="t" style="left:1445.62px;top:789.10px;font-size:11.7px;line-height:11.7px;color:#32363a;-webkit-text-stroke:0.15px #32363a;">Is Selected</div>
<svg style="position:absolute;left:1510.60px;top:792.40px;" width="8.60" height="5.30" viewBox="-1 -1 8.600000000000136 5.2999999999999545" fill="none"><path d="M0 0 L3.300000000000068 3.2999999999999545 L6.600000000000136 0" stroke="#45494d" stroke-width="1.1" stroke-linecap="round" stroke-linejoin="round"/></svg>
<svg style="position:absolute;left:1759.90px;top:782.90px;" width="19.00" height="19.00" viewBox="0 0 19 19" fill="none"><circle cx="9.5" cy="9.5" r="7.6" stroke="#c0141c" stroke-width="1.8"/><path d="M5.3 9.5 H13.7" stroke="#c0141c" stroke-width="1.8"/></svg>
<svg style="position:absolute;left:1790.80px;top:782.90px;" width="19.00" height="19.00" viewBox="0 0 19 19" fill="none"><circle cx="9.5" cy="9.5" r="7.6" stroke="#137b3b" stroke-width="1.8"/><path d="M5.3 9.5 H13.7" stroke="#137b3b" stroke-width="1.8"/><path d="M9.5 5.3 V13.7" stroke="#137b3b" stroke-width="1.8"/></svg>
<div style="position:absolute;left:981.30px;top:824.20px;width:72.50px;height:30.00px;box-sizing:border-box;border:1px solid #d3d5d8;border-radius:4px;background:#f8f8f8"></div>
<div class="t" style="left:988.21px;top:833.50px;font-size:11.7px;line-height:11.7px;color:#2a2e32;-webkit-text-stroke:0.15px #2a2e32;">20%</div>
<div style="position:absolute;left:1023.30px;top:824.70px;width:1.00px;height:29.00px;background:#d3d5d8"></div>
<svg style="position:absolute;left:1034.00px;top:838.00px;" width="8.60" height="5.30" viewBox="-1 -1 8.599999999999909 5.300000000000068" fill="none"><path d="M0 0 L3.2999999999999545 3.300000000000068 L6.599999999999909 0" stroke="#45494d" stroke-width="1.1" stroke-linecap="round" stroke-linejoin="round"/></svg>
<div style="position:absolute;left:1058.00px;top:824.20px;width:123.70px;height:30.00px;box-sizing:border-box;border:1px solid #d3d5d8;border-radius:4px;background:#f8f8f8"></div>
<div class="t" style="left:1065.05px;top:834.50px;font-size:11.7px;line-height:11.7px;color:#32363a;-webkit-text-stroke:0.15px #32363a;">Question</div>
<svg style="position:absolute;left:1167.80px;top:837.80px;" width="8.60" height="5.30" viewBox="-1 -1 8.600000000000136 5.2999999999999545" fill="none"><path d="M0 0 L3.300000000000068 3.2999999999999545 L6.600000000000136 0" stroke="#45494d" stroke-width="1.1" stroke-linecap="round" stroke-linejoin="round"/></svg>
<div style="position:absolute;left:1185.40px;top:824.20px;width:137.20px;height:30.00px;box-sizing:border-box;border:1px solid #d3d5d8;border-radius:4px;background:#f8f8f8"></div>
<div class="t" style="left:1192.45px;top:834.50px;font-size:11.7px;line-height:11.7px;color:#32363a;-webkit-text-stroke:0.15px #32363a;">Q2 How old are you?</div>
<svg style="position:absolute;left:1308.70px;top:837.80px;" width="8.60" height="5.30" viewBox="-1 -1 8.600000000000136 5.2999999999999545" fill="none"><path d="M0 0 L3.300000000000068 3.2999999999999545 L6.600000000000136 0" stroke="#45494d" stroke-width="1.1" stroke-linecap="round" stroke-linejoin="round"/></svg>
<div style="position:absolute;left:1326.70px;top:824.20px;width:107.80px;height:30.00px;box-sizing:border-box;border:1px solid #d3d5d8;border-radius:4px;background:#f8f8f8"></div>
<div class="t" style="left:1333.71px;top:834.50px;font-size:11.7px;line-height:11.7px;color:#32363a;-webkit-text-stroke:0.15px #32363a;">25-34 years old</div>
<svg style="position:absolute;left:1420.60px;top:837.80px;" width="8.60" height="5.30" viewBox="-1 -1 8.600000000000136 5.2999999999999545" fill="none"><path d="M0 0 L3.300000000000068 3.2999999999999545 L6.600000000000136 0" stroke="#45494d" stroke-width="1.1" stroke-linecap="round" stroke-linejoin="round"/></svg>
<div style="position:absolute;left:1439.10px;top:824.20px;width:85.40px;height:30.00px;box-sizing:border-box;border:1px solid #d3d5d8;border-radius:4px;background:#f8f8f8"></div>
<div class="t" style="left:1445.62px;top:834.50px;font-size:11.7px;line-height:11.7px;color:#32363a;-webkit-text-stroke:0.15px #32363a;">Is Selected</div>
<svg style="position:absolute;left:1510.60px;top:837.80px;" width="8.60" height="5.30" viewBox="-1 -1 8.600000000000136 5.2999999999999545" fill="none"><path d="M0 0 L3.300000000000068 3.2999999999999545 L6.600000000000136 0" stroke="#45494d" stroke-width="1.1" stroke-linecap="round" stroke-linejoin="round"/></svg>
<svg style="position:absolute;left:1759.90px;top:828.30px;" width="19.00" height="19.00" viewBox="0 0 19 19" fill="none"><circle cx="9.5" cy="9.5" r="7.6" stroke="#c0141c" stroke-width="1.8"/><path d="M5.3 9.5 H13.7" stroke="#c0141c" stroke-width="1.8"/></svg>
<svg style="position:absolute;left:1790.80px;top:828.30px;" width="19.00" height="19.00" viewBox="0 0 19 19" fill="none"><circle cx="9.5" cy="9.5" r="7.6" stroke="#137b3b" stroke-width="1.8"/><path d="M5.3 9.5 H13.7" stroke="#137b3b" stroke-width="1.8"/><path d="M9.5 5.3 V13.7" stroke="#137b3b" stroke-width="1.8"/></svg>
<div style="position:absolute;left:981.30px;top:869.50px;width:72.50px;height:30.00px;box-sizing:border-box;border:1px solid #d3d5d8;border-radius:4px;background:#f8f8f8"></div>
<div class="t" style="left:988.21px;top:878.80px;font-size:11.7px;line-height:11.7px;color:#2a2e32;-webkit-text-stroke:0.15px #2a2e32;">20%</div>
<div style="position:absolute;left:1023.30px;top:870.00px;width:1.00px;height:29.00px;background:#d3d5d8"></div>
<svg style="position:absolute;left:1034.00px;top:883.30px;" width="8.60" height="5.30" viewBox="-1 -1 8.599999999999909 5.300000000000068" fill="none"><path d="M0 0 L3.2999999999999545 3.300000000000068 L6.599999999999909 0" stroke="#45494d" stroke-width="1.1" stroke-linecap="round" stroke-linejoin="round"/></svg>
<div style="position:absolute;left:1058.00px;top:869.50px;width:123.70px;height:30.00px;box-sizing:border-box;border:1px solid #d3d5d8;border-radius:4px;background:#f8f8f8"></div>
<div class="t" style="left:1065.05px;top:879.80px;font-size:11.7px;line-height:11.7px;color:#32363a;-webkit-text-stroke:0.15px #32363a;">Question</div>
<svg style="position:absolute;left:1167.80px;top:883.10px;" width="8.60" height="5.30" viewBox="-1 -1 8.600000000000136 5.2999999999999545" fill="none"><path d="M0 0 L3.300000000000068 3.2999999999999545 L6.600000000000136 0" stroke="#45494d" stroke-width="1.1" stroke-linecap="round" stroke-linejoin="round"/></svg>
<div style="position:absolute;left:1185.40px;top:869.50px;width:137.20px;height:30.00px;box-sizing:border-box;border:1px solid #d3d5d8;border-radius:4px;background:#f8f8f8"></div>
<div class="t" style="left:1192.45px;top:879.80px;font-size:11.7px;line-height:11.7px;color:#32363a;-webkit-text-stroke:0.15px #32363a;">Q2 How old are you?</div>
<svg style="position:absolute;left:1308.70px;top:883.10px;" width="8.60" height="5.30" viewBox="-1 -1 8.600000000000136 5.2999999999999545" fill="none"><path d="M0 0 L3.300000000000068 3.2999999999999545 L6.600000000000136 0" stroke="#45494d" stroke-width="1.1" stroke-linecap="round" stroke-linejoin="round"/></svg>
<div style="position:absolute;left:1326.70px;top:869.50px;width:107.80px;height:30.00px;box-sizing:border-box;border:1px solid #d3d5d8;border-radius:4px;background:#f8f8f8"></div>
<div class="t" style="left:1333.85px;top:879.80px;font-size:11.7px;line-height:11.7px;color:#32363a;-webkit-text-stroke:0.15px #32363a;">35-44 years old</div>
<svg style="position:absolute;left:1420.60px;top:883.10px;" width="8.60" height="5.30" viewBox="-1 -1 8.600000000000136 5.2999999999999545" fill="none"><path d="M0 0 L3.300000000000068 3.2999999999999545 L6.600000000000136 0" stroke="#45494d" stroke-width="1.1" stroke-linecap="round" stroke-linejoin="round"/></svg>
<div style="position:absolute;left:1439.10px;top:869.50px;width:85.40px;height:30.00px;box-sizing:border-box;border:1px solid #d3d5d8;border-radius:4px;background:#f8f8f8"></div>
<div class="t" style="left:1445.62px;top:879.80px;font-size:11.7px;line-height:11.7px;color:#32363a;-webkit-text-stroke:0.15px #32363a;">Is Selected</div>
<svg style="position:absolute;left:1510.60px;top:883.10px;" width="8.60" height="5.30" viewBox="-1 -1 8.600000000000136 5.2999999999999545" fill="none"><path d="M0 0 L3.300000000000068 3.2999999999999545 L6.600000000000136 0" stroke="#45494d" stroke-width="1.1" stroke-linecap="round" stroke-linejoin="round"/></svg>
<svg style="position:absolute;left:1759.90px;top:873.60px;" width="19.00" height="19.00" viewBox="0 0 19 19" fill="none"><circle cx="9.5" cy="9.5" r="7.6" stroke="#c0141c" stroke-width="1.8"/><path d="M5.3 9.5 H13.7" stroke="#c0141c" stroke-width="1.8"/></svg>
<svg style="position:absolute;left:1790.80px;top:873.60px;" width="19.00" height="19.00" viewBox="0 0 19 19" fill="none"><circle cx="9.5" cy="9.5" r="7.6" stroke="#137b3b" stroke-width="1.8"/><path d="M5.3 9.5 H13.7" stroke="#137b3b" stroke-width="1.8"/><path d="M9.5 5.3 V13.7" stroke="#137b3b" stroke-width="1.8"/></svg>
<div style="position:absolute;left:981.30px;top:914.50px;width:72.50px;height:30.00px;box-sizing:border-box;border:1px solid #d3d5d8;border-radius:4px;background:#f8f8f8"></div>
<div class="t" style="left:987.91px;top:923.80px;font-size:11.7px;line-height:11.7px;color:#2a2e32;-webkit-text-stroke:0.15px #2a2e32;">100%</div>
<div style="position:absolute;left:1023.30px;top:915.00px;width:1.00px;height:29.00px;background:#d3d5d8"></div>
<svg style="position:absolute;left:1034.00px;top:928.30px;" width="8.60" height="5.30" viewBox="-1 -1 8.599999999999909 5.300000000000068" fill="none"><path d="M0 0 L3.2999999999999545 3.300000000000068 L6.599999999999909 0" stroke="#45494d" stroke-width="1.1" stroke-linecap="round" stroke-linejoin="round"/></svg>
<div style="position:absolute;left:1058.00px;top:914.50px;width:123.70px;height:30.00px;box-sizing:border-box;border:1px solid #d3d5d8;border-radius:4px;background:#f8f8f8"></div>
<div class="t" style="left:1065.05px;top:924.80px;font-size:11.7px;line-height:11.7px;color:#32363a;-webkit-text-stroke:0.15px #32363a;">Question</div>
<svg style="position:absolute;left:1167.80px;top:928.10px;" width="8.60" height="5.30" viewBox="-1 -1 8.600000000000136 5.2999999999999545" fill="none"><path d="M0 0 L3.300000000000068 3.2999999999999545 L6.600000000000136 0" stroke="#45494d" stroke-width="1.1" stroke-linecap="round" stroke-linejoin="round"/></svg>
<div style="position:absolute;left:1185.40px;top:914.50px;width:137.20px;height:30.00px;box-sizing:border-box;border:1px solid #d3d5d8;border-radius:4px;background:#f8f8f8"></div>
<div class="t" style="left:1192.45px;top:924.80px;font-size:11.7px;line-height:11.7px;color:#32363a;-webkit-text-stroke:0.15px #32363a;">Q2 How old are you?</div>
<svg style="position:absolute;left:1308.70px;top:928.10px;" width="8.60" height="5.30" viewBox="-1 -1 8.600000000000136 5.2999999999999545" fill="none"><path d="M0 0 L3.300000000000068 3.2999999999999545 L6.600000000000136 0" stroke="#45494d" stroke-width="1.1" stroke-linecap="round" stroke-linejoin="round"/></svg>
<div style="position:absolute;left:1326.70px;top:914.50px;width:97.60px;height:30.00px;box-sizing:border-box;border:1px solid #d3d5d8;border-radius:4px;background:#f8f8f8"></div>
<div class="t" style="left:1333.71px;top:924.80px;font-size:11.7px;line-height:11.7px;color:#32363a;-webkit-text-stroke:0.15px #32363a;">65+ years old</div>
<svg style="position:absolute;left:1410.40px;top:928.10px;" width="8.60" height="5.30" viewBox="-1 -1 8.600000000000136 5.2999999999999545" fill="none"><path d="M0 0 L3.300000000000068 3.2999999999999545 L6.600000000000136 0" stroke="#45494d" stroke-width="1.1" stroke-linecap="round" stroke-linejoin="round"/></svg>
<div style="position:absolute;left:1428.70px;top:914.50px;width:85.30px;height:30.00px;box-sizing:border-box;border:1px solid #d3d5d8;border-radius:4px;background:#f8f8f8"></div>
<div class="t" style="left:1435.22px;top:924.80px;font-size:11.7px;line-height:11.7px;color:#32363a;-webkit-text-stroke:0.15px #32363a;">Is Selected</div>
<svg style="position:absolute;left:1500.10px;top:928.10px;" width="8.60" height="5.30" viewBox="-1 -1 8.600000000000136 5.2999999999999545" fill="none"><path d="M0 0 L3.300000000000068 3.2999999999999545 L6.600000000000136 0" stroke="#45494d" stroke-width="1.1" stroke-linecap="round" stroke-linejoin="round"/></svg>
<svg style="position:absolute;left:1759.90px;top:918.60px;" width="19.00" height="19.00" viewBox="0 0 19 19" fill="none"><circle cx="9.5" cy="9.5" r="7.6" stroke="#c0141c" stroke-width="1.8"/><path d="M5.3 9.5 H13.7" stroke="#c0141c" stroke-width="1.8"/></svg>
<svg style="position:absolute;left:1790.80px;top:918.60px;" width="19.00" height="19.00" viewBox="0 0 19 19" fill="none"><circle cx="9.5" cy="9.5" r="7.6" stroke="#137b3b" stroke-width="1.8"/><path d="M5.3 9.5 H13.7" stroke="#137b3b" stroke-width="1.8"/><path d="M9.5 5.3 V13.7" stroke="#137b3b" stroke-width="1.8"/></svg>
<div style="position:absolute;left:998.00px;top:971.00px;width:373.00px;height:1.20px;background:#dcdee0"></div>
<div style="position:absolute;left:1426.00px;top:971.00px;width:372.00px;height:1.20px;background:#dcdee0"></div>
<div class="t" style="left:1387.56px;top:969.30px;font-size:9.8px;line-height:9.8px;color:#5f6367;font-weight:bold;">AND</div>
<div style="position:absolute;left:981.40px;top:996.00px;width:70.70px;height:29.60px;box-sizing:border-box;border:1px solid #d3d5d8;border-radius:4px;background:#f8f8f8"></div>
<div class="t" style="left:988.43px;top:1005.10px;font-size:11.7px;line-height:11.7px;color:#2a2e32;-webkit-text-stroke:0.15px #2a2e32;">50%</div>
<div style="position:absolute;left:1056.30px;top:996.00px;width:123.40px;height:29.60px;box-sizing:border-box;border:1px solid #d3d5d8;border-radius:4px;background:#f8f8f8"></div>
<div class="t" style="left:1063.35px;top:1006.10px;font-size:11.7px;line-height:11.7px;color:#32363a;-webkit-text-stroke:0.15px #32363a;">Question</div>
<svg style="position:absolute;left:1165.80px;top:1009.40px;" width="8.60" height="5.30" viewBox="-1 -1 8.600000000000136 5.2999999999999545" fill="none"><path d="M0 0 L3.300000000000068 3.2999999999999545 L6.600000000000136 0" stroke="#45494d" stroke-width="1.1" stroke-linecap="round" stroke-linejoin="round"/></svg>
<div style="position:absolute;left:1183.90px;top:996.00px;width:233.10px;height:29.60px;box-sizing:border-box;border:1px solid #d3d5d8;border-radius:4px;background:#f8f8f8"></div>
<div class="t" style="left:1190.95px;top:1006.10px;font-size:11.7px;line-height:11.7px;color:#32363a;-webkit-text-stroke:0.15px #32363a;">Q5 What was your ...e past 12 months?</div>
<svg style="position:absolute;left:1403.10px;top:1009.40px;" width="8.60" height="5.30" viewBox="-1 -1 8.600000000000136 5.2999999999999545" fill="none"><path d="M0 0 L3.300000000000068 3.2999999999999545 L6.600000000000136 0" stroke="#45494d" stroke-width="1.1" stroke-linecap="round" stroke-linejoin="round"/></svg>
<div style="position:absolute;left:1421.40px;top:996.00px;width:122.10px;height:29.60px;box-sizing:border-box;border:1px solid #d3d5d8;border-radius:4px;background:#f8f8f8"></div>
<div class="t" style="left:1428.04px;top:1006.10px;font-size:11.7px;line-height:11.7px;color:#32363a;-webkit-text-stroke:0.15px #32363a;">Less than $25,000</div>
<svg style="position:absolute;left:1529.60px;top:1009.40px;" width="8.60" height="5.30" viewBox="-1 -1 8.600000000000136 5.2999999999999545" fill="none"><path d="M0 0 L3.300000000000068 3.2999999999999545 L6.600000000000136 0" stroke="#45494d" stroke-width="1.1" stroke-linecap="round" stroke-linejoin="round"/></svg>
<div style="position:absolute;left:1547.70px;top:996.00px;width:84.60px;height:29.60px;box-sizing:border-box;border:1px solid #d3d5d8;border-radius:4px;background:#f8f8f8"></div>
<div class="t" style="left:1554.22px;top:1006.10px;font-size:11.7px;line-height:11.7px;color:#32363a;-webkit-text-stroke:0.15px #32363a;">Is Selected</div>
<svg style="position:absolute;left:1618.40px;top:1009.40px;" width="8.60" height="5.30" viewBox="-1 -1 8.600000000000136 5.2999999999999545" fill="none"><path d="M0 0 L3.300000000000068 3.2999999999999545 L6.600000000000136 0" stroke="#45494d" stroke-width="1.1" stroke-linecap="round" stroke-linejoin="round"/></svg>
<svg style="position:absolute;left:1759.90px;top:999.90px;" width="19.00" height="19.00" viewBox="0 0 19 19" fill="none"><circle cx="9.5" cy="9.5" r="7.6" stroke="#c0141c" stroke-width="1.8"/><path d="M5.3 9.5 H13.7" stroke="#c0141c" stroke-width="1.8"/></svg>
<svg style="position:absolute;left:1790.80px;top:999.90px;" width="19.00" height="19.00" viewBox="0 0 19 19" fill="none"><circle cx="9.5" cy="9.5" r="7.6" stroke="#137b3b" stroke-width="1.8"/><path d="M5.3 9.5 H13.7" stroke="#137b3b" stroke-width="1.8"/><path d="M9.5 5.3 V13.7" stroke="#137b3b" stroke-width="1.8"/></svg>
<svg style="position:absolute;left:1004.50px;top:1030.00px;" width="17.00" height="60.00" viewBox="0 0 17 60" fill="none"><path d="M0.8 0 V60 M0.8 19.5 Q0.8 23.3 4.6 23.3 H16" stroke="#b5b8bc" stroke-width="1.2"/></svg>
<div style="position:absolute;left:1020.30px;top:1041.10px;width:71.00px;height:29.70px;box-sizing:border-box;border:1px solid #d3d5d8;border-radius:4px;background:#f8f8f8"></div>
<div class="t" style="left:1027.88px;top:1051.25px;font-size:11.7px;line-height:11.7px;color:#32363a;-webkit-text-stroke:0.15px #32363a;">And</div>
<svg style="position:absolute;left:1077.40px;top:1054.55px;" width="8.60" height="5.30" viewBox="-1 -1 8.600000000000136 5.300000000000182" fill="none"><path d="M0 0 L3.300000000000068 3.300000000000182 L6.600000000000136 0" stroke="#45494d" stroke-width="1.1" stroke-linecap="round" stroke-linejoin="round"/></svg>
<div style="position:absolute;left:1095.40px;top:1041.10px;width:123.20px;height:29.70px;box-sizing:border-box;border:1px solid #d3d5d8;border-radius:4px;background:#f8f8f8"></div>
<div class="t" style="left:1102.45px;top:1051.25px;font-size:11.7px;line-height:11.7px;color:#32363a;-webkit-text-stroke:0.15px #32363a;">Question</div>
<svg style="position:absolute;left:1204.70px;top:1054.55px;" width="8.60" height="5.30" viewBox="-1 -1 8.600000000000136 5.300000000000182" fill="none"><path d="M0 0 L3.300000000000068 3.300000000000182 L6.600000000000136 0" stroke="#45494d" stroke-width="1.1" stroke-linecap="round" stroke-linejoin="round"/></svg>
<div style="position:absolute;left:1223.00px;top:1041.10px;width:233.00px;height:29.70px;box-sizing:border-box;border:1px solid #d3d5d8;border-radius:4px;background:#f8f8f8"></div>
<div class="t" style="left:1230.05px;top:1051.25px;font-size:11.7px;line-height:11.7px;color:#32363a;-webkit-text-stroke:0.15px #32363a;">Q5 What was your ...e past 12 months?</div>
<svg style="position:absolute;left:1442.10px;top:1054.55px;" width="8.60" height="5.30" viewBox="-1 -1 8.600000000000136 5.300000000000182" fill="none"><path d="M0 0 L3.300000000000068 3.300000000000182 L6.600000000000136 0" stroke="#45494d" stroke-width="1.1" stroke-linecap="round" stroke-linejoin="round"/></svg>
<div style="position:absolute;left:1460.50px;top:1041.10px;width:116.10px;height:29.70px;box-sizing:border-box;border:1px solid #d3d5d8;border-radius:4px;background:#f8f8f8"></div>
<div class="t" style="left:1467.97px;top:1051.25px;font-size:11.7px;line-height:11.7px;color:#32363a;-webkit-text-stroke:0.15px #32363a;">$25,000-$49,999</div>
<svg style="position:absolute;left:1562.70px;top:1054.55px;" width="8.60" height="5.30" viewBox="-1 -1 8.600000000000136 5.300000000000182" fill="none"><path d="M0 0 L3.300000000000068 3.300000000000182 L6.600000000000136 0" stroke="#45494d" stroke-width="1.1" stroke-linecap="round" stroke-linejoin="round"/></svg>
<div style="position:absolute;left:1581.00px;top:1041.10px;width:84.70px;height:29.70px;box-sizing:border-box;border:1px solid #d3d5d8;border-radius:4px;background:#f8f8f8"></div>
<div class="t" style="left:1587.52px;top:1051.25px;font-size:11.7px;line-height:11.7px;color:#32363a;-webkit-text-stroke:0.15px #32363a;">Is Selected</div>
<svg style="position:absolute;left:1651.80px;top:1054.55px;" width="8.60" height="5.30" viewBox="-1 -1 8.600000000000136 5.300000000000182" fill="none"><path d="M0 0 L3.300000000000068 3.300000000000182 L6.600000000000136 0" stroke="#45494d" stroke-width="1.1" stroke-linecap="round" stroke-linejoin="round"/></svg>
<svg style="position:absolute;left:1759.90px;top:1045.05px;" width="19.00" height="19.00" viewBox="0 0 19 19" fill="none"><circle cx="9.5" cy="9.5" r="7.6" stroke="#c0141c" stroke-width="1.8"/><path d="M5.3 9.5 H13.7" stroke="#c0141c" stroke-width="1.8"/></svg>
<svg style="position:absolute;left:1790.80px;top:1045.05px;" width="19.00" height="19.00" viewBox="0 0 19 19" fill="none"><circle cx="9.5" cy="9.5" r="7.6" stroke="#137b3b" stroke-width="1.8"/><path d="M5.3 9.5 H13.7" stroke="#137b3b" stroke-width="1.8"/><path d="M9.5 5.3 V13.7" stroke="#137b3b" stroke-width="1.8"/></svg>
</div>
</body></html>
